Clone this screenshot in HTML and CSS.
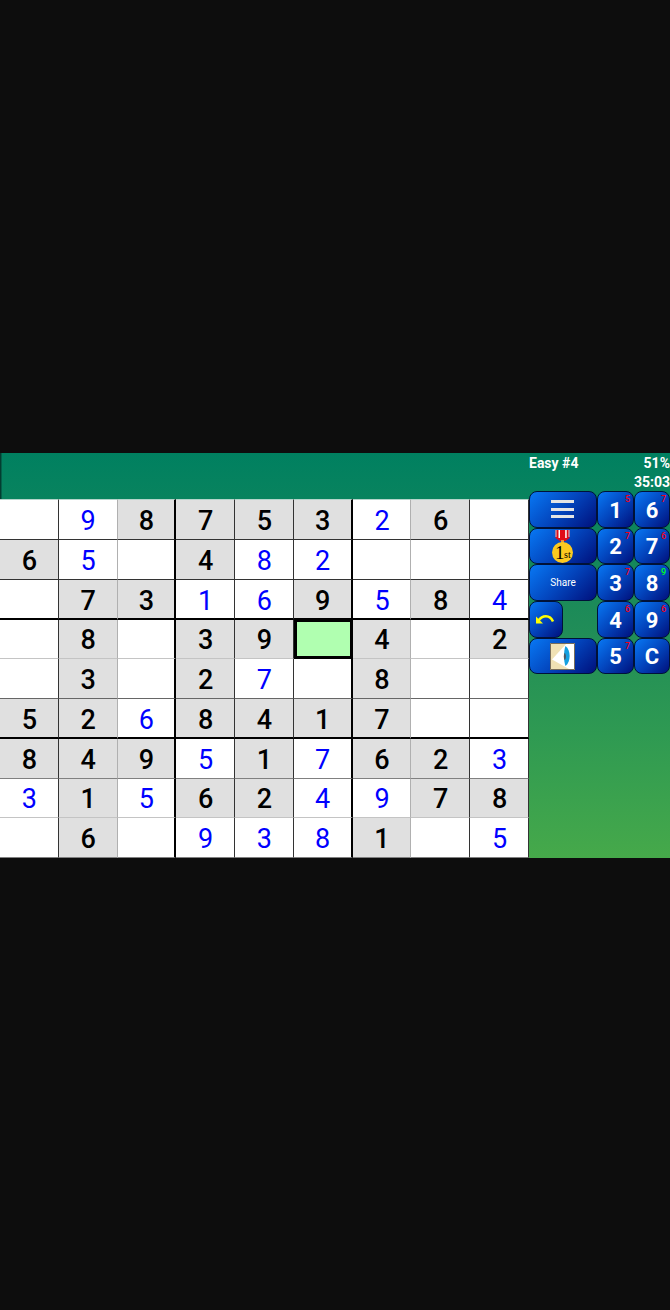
FILE: index.html
```html
<!DOCTYPE html>
<html lang="en">
<head>
<meta charset="utf-8">
<meta name="viewport" content="width=device-width, initial-scale=1">
<title>Sudoku</title>
<link rel="stylesheet" href="styles.css">
</head>
<body>
<main class="game">
  <section class="board-area">
    <table class="board" aria-label="Sudoku board">
      <tbody>
      <tr><td></td><td class="own">9</td><td class="given">8</td><td class="given">7</td><td class="given">5</td><td class="given">3</td><td class="own">2</td><td class="given">6</td><td></td></tr>
      <tr><td class="given">6</td><td class="own">5</td><td></td><td class="given">4</td><td class="own">8</td><td class="own">2</td><td></td><td></td><td></td></tr>
      <tr><td></td><td class="given">7</td><td class="given">3</td><td class="own">1</td><td class="own">6</td><td class="given">9</td><td class="own">5</td><td class="given">8</td><td class="own">4</td></tr>
      <tr><td></td><td class="given">8</td><td></td><td class="given">3</td><td class="given">9</td><td class="selected"></td><td class="given">4</td><td></td><td class="given">2</td></tr>
      <tr><td></td><td class="given">3</td><td></td><td class="given">2</td><td class="own">7</td><td></td><td class="given">8</td><td></td><td></td></tr>
      <tr><td class="given">5</td><td class="given">2</td><td class="own">6</td><td class="given">8</td><td class="given">4</td><td class="given">1</td><td class="given">7</td><td></td><td></td></tr>
      <tr><td class="given">8</td><td class="given">4</td><td class="given">9</td><td class="own">5</td><td class="given">1</td><td class="own">7</td><td class="given">6</td><td class="given">2</td><td class="own">3</td></tr>
      <tr><td class="own">3</td><td class="given">1</td><td class="own">5</td><td class="given">6</td><td class="given">2</td><td class="own">4</td><td class="own">9</td><td class="given">7</td><td class="given">8</td></tr>
      <tr><td></td><td class="given">6</td><td></td><td class="own">9</td><td class="own">3</td><td class="own">8</td><td class="given">1</td><td></td><td class="own">5</td></tr>
      </tbody>
    </table>
  </section>
  <aside class="panel">
    <div class="status"><span>Easy #4</span><span>51%</span></div>
    <div class="status time"><span>35:03</span></div>
    <div class="keys">
      <button class="key" aria-label="Menu"><svg width="24" height="20" viewBox="0 0 24 20"><path d="M0 0h23v3H0zM0 8h23v3H0zM0 15h23v3H0z" fill="#e4e4e4"/></svg></button>
      <button class="key digit">1<span class="left">5</span></button>
      <button class="key digit">6<span class="left">7</span></button>

      <button class="key" aria-label="Ranking"><svg width="24" height="36" viewBox="0 0 24 36"><path d="M4.500 2h14v8l-4 3H9l-4.500-3z" fill="#e00c18"/><path d="M7.500 2H9v8H7.500zM14.200 2h1.500v8h-1.500z" fill="#fff"/><path d="M4.500 2h1v7h-1zM17.500 2h1v7h-1z" fill="#c9c9d6"/><path d="M10 12h3v3h-3z" fill="#e7963e"/><circle cx="11.500" cy="24.500" r="10.500" fill="#fcc920"/><text x="4" y="31" class="medal-one">1</text><text x="13" y="30" class="medal-st">st</text></svg></button>
      <button class="key digit">2<span class="left">7</span></button>
      <button class="key digit">7<span class="left">6</span></button>

      <button class="key share">Share</button>
      <button class="key digit">3<span class="left">7</span></button>
      <button class="key digit">8<span class="left few">9</span></button>

      <button class="key undo" aria-label="Undo"><svg width="22" height="12" viewBox="0 0 22 12"><path d="M3.500 6.500C7 1 15 0 18 7.500" fill="none" stroke="#ff0" stroke-width="2.500"/><path d="M1 2.500v7h7z" fill="#ff0"/></svg></button>
      <button class="key digit">4<span class="left">6</span></button>
      <button class="key digit">9<span class="left">6</span></button>

      <button class="key" aria-label="Show candidates"><svg width="26" height="27" viewBox="0 0 26 27"><path d="M0 0h25v27H0z" fill="#f0e1b4"/><path d="M16 1h8v25h-5L2 16.500z" fill="#fff"/><path d="M15.500 3c5.500 4 5.500 16 0 20-2-5-2-15 0-20z" fill="#14a0e0"/><path d="M14.500 10c2 1 2 6 0 7-1-2-1-5 0-7z" fill="#4c5966"/><path d="M.5.500h24v26H.5z" fill="none" stroke="#443c35" stroke-opacity=".7"/></svg></button>
      <button class="key digit">5<span class="left">7</span></button>
      <button class="key digit">C</button>
    </div>
  </aside>
</main>
</body>
</html>
```
FILE: styles.css
```css
* { box-sizing: border-box; }

body {
  margin: 0;
  min-height: 100vh;
  padding-top: 1px;
  display: grid;
  align-content: center;
  background: #0d0d0d;
  font-family: Roboto, sans-serif;
}

.game {
  display: grid;
  grid-template-columns: minmax(0, 1fr) 141px;
  background: linear-gradient(#008060, #1f8c58 42%, #2f9a52 70%, #46a94a);
}

.board-area {
  padding-top: 46px;
  background: linear-gradient(90deg, #033d30 1px, #04604a 1px, #04604a 2px, transparent 2px);
}

.board {
  width: 100%;
  table-layout: fixed;
  border-collapse: separate;
  border-spacing: 0;
  background: #fff;
}

.board td {
  height: 40px;
  padding: 3px 0 0 1px;
  border: solid #333;
  border-width: 0 1px 1px 0;
  text-align: center;
  vertical-align: middle;
  font-size: 27px;
  line-height: 35px;
}

.board tr:first-child td { height: 41px; border-top: 1px solid #b5d5cb; }
.board tr:nth-child(4) td,
.board tr:nth-child(8) td { height: 39px; border-bottom-color: #c4c4c4; }
.board tr:nth-child(5) td { border-bottom-color: #666; }
.board tr:nth-child(7) td,
.board tr:nth-child(9) td { border-bottom-color: #808080; }
.board td:nth-child(2),
.board td:nth-child(7) { border-right-color: #b0b0b0; }
.board td:nth-child(3),
.board td:nth-child(6) { border-right: 2px solid #000; }
.board tr:nth-child(3) td,
.board tr:nth-child(6) td { border-bottom: 2px solid #000; line-height: 34px; }

.given { background: #e0e0e0; font-weight: 500; color: #000; }
.own { color: #00f; }
.board tr .selected:nth-child(n) {
  border: solid #000;
  border-width: 2px 3px 3px 3px;
  background: #b0ffb0;
}

.panel { min-width: 0; color: #fff; }

.status {
  display: flex;
  justify-content: space-between;
  height: 19px;
  font-size: 14px;
  font-weight: 700;
  line-height: 21px;
}

.time { justify-content: flex-end; }

.keys {
  display: grid;
  grid-template-columns: 68px 37px 36px;
  grid-template-rows: 37px 36px 37px 37px 36px;
}

.key {
  position: relative;
  display: flex;
  align-items: center;
  justify-content: center;
  padding: 0;
  border: 1px solid #001238;
  border-radius: 8px;
  background: linear-gradient(135deg, #0878f4, #0345bd 50%, #00107c);
  color: #fff;
  font-family: inherit;
}

.digit { padding-top: 1px; font-size: 22px; font-weight: 700; }
.share { font-size: 10px; }
.undo { width: 34px; }

.left {
  position: absolute;
  top: 3px;
  right: 3px;
  font-size: 9px;
  font-weight: 500;
  line-height: 9px;
  color: #f00018;
}

.few { color: #0f2; }

.medal-one { font: 19px "Liberation Serif", serif; }
.medal-st { font: 10px "Liberation Serif", serif; }
```
